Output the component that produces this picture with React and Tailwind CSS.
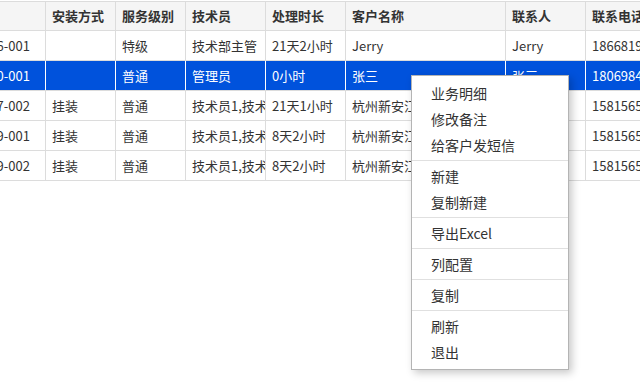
const columns = [
  { key: "no", title: "", w: "w-[46px]" },
  { key: "install", title: "安装方式", w: "w-[70px]" },
  { key: "level", title: "服务级别", w: "w-[70px]" },
  { key: "tech", title: "技术员", w: "w-[80px]" },
  { key: "time", title: "处理时长", w: "w-[80px]" },
  { key: "customer", title: "客户名称", w: "w-[160px]" },
  { key: "contact", title: "联系人", w: "w-[80px]" },
  { key: "phone", title: "联系电话", w: "w-[120px]" },
];

const rows = [
  { no: "FW20230316-001", install: "", level: "特级", tech: "技术部主管", time: "21天2小时", customer: "Jerry", contact: "Jerry", phone: "18668191234" },
  { no: "FW20230420-001", install: "", level: "普通", tech: "管理员", time: "0小时", customer: "张三", contact: "张三", phone: "18069845566" },
  { no: "FW20230417-002", install: "挂装", level: "普通", tech: "技术员1,技术员2", time: "21天1小时", customer: "杭州新安江服装有限公司", contact: "王经理", phone: "15815651234" },
  { no: "FW20230429-001", install: "挂装", level: "普通", tech: "技术员1,技术员2", time: "8天2小时", customer: "杭州新安江服装有限公司", contact: "王经理", phone: "15815651234" },
  { no: "FW20230429-002", install: "挂装", level: "普通", tech: "技术员1,技术员2", time: "8天2小时", customer: "杭州新安江服装有限公司", contact: "王经理", phone: "15815651234" },
];

const menu = [
  ["业务明细", "修改备注", "给客户发短信"],
  ["新建", "复制新建"],
  ["导出Excel"],
  ["列配置"],
  ["复制"],
  ["刷新", "退出"],
];

const font = { fontFamily: '"Noto Sans CJK SC", "Noto Sans", sans-serif' };

export default function App() {
  const selected = 1;

  return (
    <div className="relative h-[382px] w-[640px] overflow-hidden bg-white pt-px text-[13px] text-[#333]" style={font}>
      <div className="border-t border-[#dcdcdc]">
        <div className="flex h-[29px] border-b border-[#dcdcdc] bg-[#f5f5f5] font-bold">
          {columns.map((c) => (
            <div key={c.key} className={`${c.w} flex shrink-0 items-center overflow-hidden whitespace-nowrap border-r border-[#dcdcdc] px-[6px]`}>
              {c.title}
            </div>
          ))}
        </div>

        {rows.map((r, i) => {
          const active = i === selected;
          return (
            <div
              key={i}
              className={active ? "flex h-[30px] border-b border-[#dcdcdc] bg-[#0052dc] text-white" : "flex h-[30px] border-b border-[#dcdcdc]"}
            >
              {columns.map((c) => (
                <div
                  key={c.key}
                  className={`${c.w} flex shrink-0 items-center overflow-hidden whitespace-nowrap border-r px-[6px] ${active ? "border-white" : "border-[#dcdcdc]"} ${c.key === "no" ? "justify-end pr-[15px]" : ""}`}
                >
                  {r[c.key]}
                </div>
              ))}
            </div>
          );
        })}
      </div>

      <div className="absolute left-[411px] top-[75px] w-[158px] border border-[#b4b4b4] bg-white py-[4px] text-[14px] text-[#333] shadow-[3px_3px_8px_rgba(0,0,0,0.22)]">
        {menu.map((group, gi) => (
          <div key={gi}>
            {gi > 0 && <div className="my-[2px] h-px bg-[#e0e0e0]" />}
            {group.map((item) => (
              <div key={item} className="flex h-[26px] items-center pl-[19px]">
                {item}
              </div>
            ))}
          </div>
        ))}
      </div>
    </div>
  );
}
